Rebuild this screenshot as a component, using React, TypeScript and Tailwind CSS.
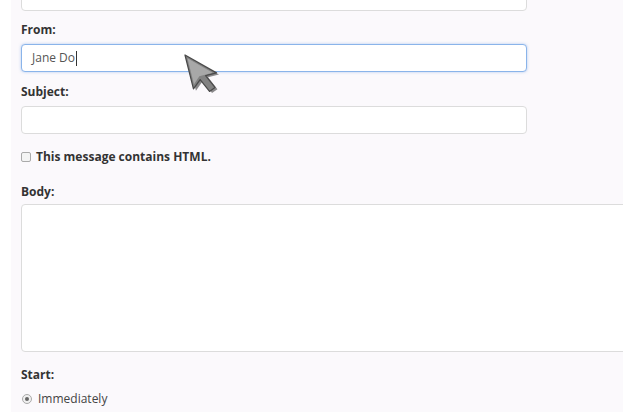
import React from "react";

const font = { fontFamily: '"Open Sans", "Liberation Sans", sans-serif' };

function Label({ children, className = "" }: { children: React.ReactNode; className?: string }) {
  return (
    <div className={`h-[18px] text-[12px] font-bold leading-[18px] text-[#333] ${className}`}>
      {children}
    </div>
  );
}

function Cursor() {
  return (
    <svg
      className="absolute left-[180px] top-[50px]"
      width="44"
      height="52"
      viewBox="0 0 44 52"
    >
      <g transform="translate(5 5) rotate(-14 0 0) scale(1.25)">
        <path
          d="M0 0 L0 28 L7 22 L12 33 L17 31 L12 20 L21 20 Z"
          fill="#2e2e2e"
          transform="translate(1.6 1.8)"
          opacity="0.55"
        />
        <path
          d="M0 0 L0 28 L7 22 L12 33 L17 31 L12 20 L21 20 Z"
          fill="#828282"
          stroke="#4a4a4a"
          strokeWidth="1"
          strokeLinejoin="round"
        />
        <path d="M1.3 3 L1.3 24.5 L7 19.2 L18 19.2 Z" fill="#a8a8a8" />
      </g>
    </svg>
  );
}

export default function App() {
  return (
    <div className="relative flex h-[412px] w-[623px] overflow-hidden bg-white" style={font}>
      <div className="w-[11px] shrink-0 bg-white" />
      <div className="flex-1 bg-[#fbf9fc] pl-[10px]">
        <div className="-mt-[18px] h-[29px] w-[506px] rounded-[4px] border border-[#dcdcdc] bg-white" />

        <Label className="mt-[10px]">From:</Label>
        <div className="mt-[5px] flex h-[28px] w-[506px] items-center rounded-[4px] border border-[#8ab4ea] bg-white px-[10px] text-[12px] text-[#555] shadow-[0_0_3px_rgba(102,155,230,0.5)]">
          <span>Jane Do</span>
          <span className="ml-[1px] h-[15px] w-px bg-[#333]" />
        </div>

        <Label className="mt-[11px]">Subject:</Label>
        <div className="mt-[5px] h-[28px] w-[506px] rounded-[4px] border border-[#dcdcdc] bg-white" />

        <div className="mt-[14px] flex h-[18px] items-center gap-[5px]">
          <span className="h-[10px] w-[10px] rounded-[2px] border border-[#aaa] bg-[#f4f4f4]" />
          <span className="text-[12px] font-bold text-[#333]">This message contains HTML.</span>
        </div>

        <Label className="mt-[17px]">Body:</Label>
        <div className="mt-[3px] h-[148px] w-[620px] rounded-[4px] border border-[#dcdcdc] bg-white" />

        <Label className="mt-[14px]">Start:</Label>
        <div className="mt-[6px] flex h-[18px] items-center gap-[6px] pl-[1px]">
          <span className="flex h-[10px] w-[10px] items-center justify-center rounded-full border border-[#aaa] bg-[#f0f0f0]">
            <span className="h-[4px] w-[4px] rounded-full bg-[#666]" />
          </span>
          <span className="text-[12px] text-[#444]">Immediately</span>
        </div>
        <div className="mt-[3px] flex h-[18px] items-center gap-[6px] pl-[1px]">
          <span className="h-[10px] w-[10px] rounded-full border border-[#aaa] bg-[#f0f0f0]" />
          <span className="text-[12px] text-[#444]">On date</span>
        </div>
      </div>
      <Cursor />
    </div>
  );
}
